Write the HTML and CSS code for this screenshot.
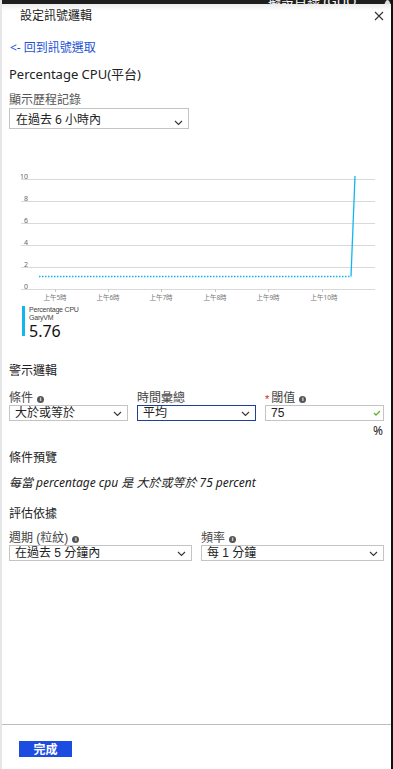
FILE: index.html
```html
<!DOCTYPE html>
<html lang="zh-Hant">
<head>
    <meta charset="UTF-8">
    <meta name="viewport" content="width=device-width, initial-scale=1.0">
    <title>設定訊號邏輯</title>
    <link rel="stylesheet" href="styles.css">
</head>
<body>
    <div class="panel">
        <div class="topbar"><span class="topbar-text">擬設首錄 (GUO...</span><span class="topbar-dot"></span></div>
        <div class="header">
            <span class="title">設定訊號邏輯</span>
            <svg class="close" width="10" height="10" viewBox="0 0 10 10"><path d="M1 1L9 9M9 1L1 9" stroke="#333" stroke-width="1.1" fill="none"/></svg>
        </div>

        <div class="content">
            <a class="back-link" href="#">&lt;- 回到訊號選取</a>
            <div class="metric-title">Percentage CPU(平台)</div>
            <div class="label">顯示歷程記錄</div>
            <div class="select select-history">
                <span>在過去 6 小時內</span>
                <svg class="chevron" width="9" height="6" viewBox="0 0 9 6"><path d="M1 1L4.5 4.5L8 1" stroke="#333" stroke-width="1.1" fill="none"/></svg>
            </div>
        </div>

        <svg class="chart" width="389" height="173" viewBox="2 129 389 173">
            <g stroke="#d9d9d9" stroke-width="1">
                <line x1="21" y1="179.5" x2="375" y2="179.5"/>
                <line x1="21" y1="201.5" x2="375" y2="201.5"/>
                <line x1="21" y1="223.5" x2="375" y2="223.5"/>
                <line x1="21" y1="245.5" x2="375" y2="245.5"/>
                <line x1="21" y1="267.5" x2="375" y2="267.5"/>
                <line x1="21" y1="289.5" x2="375" y2="289.5"/>
            </g>
            <g stroke="#c8c8c8" stroke-width="1">
                <line x1="55.5" y1="289" x2="55.5" y2="292"/>
                <line x1="108.5" y1="289" x2="108.5" y2="292"/>
                <line x1="161.5" y1="289" x2="161.5" y2="292"/>
                <line x1="215.5" y1="289" x2="215.5" y2="292"/>
                <line x1="268.5" y1="289" x2="268.5" y2="292"/>
                <line x1="322.5" y1="289" x2="322.5" y2="292"/>
            </g>
            <g class="axis-y" font-size="7" fill="#666">
                <text x="20" y="179">10</text>
                <text x="24" y="201">8</text>
                <text x="24" y="223">6</text>
                <text x="24" y="245">4</text>
                <text x="24" y="267">2</text>
                <text x="24" y="289">0</text>
            </g>
            <g class="axis-x" font-size="6.5" fill="#777" text-anchor="middle">
                <text x="55" y="300">上午5時</text>
                <text x="108" y="300">上午6時</text>
                <text x="161" y="300">上午7時</text>
                <text x="215" y="300">上午8時</text>
                <text x="268" y="300">上午9時</text>
                <text x="324" y="300">上午10時</text>
            </g>
            <line x1="39" y1="276.5" x2="351" y2="276.5" stroke="#11b6f0" stroke-width="1.3" stroke-dasharray="1.5 1.5"/>
            <polyline points="351,276.5 355,176" stroke="#11b6f0" stroke-width="1.3" fill="none"/>
        </svg>

        <div class="content">
            <div class="legend">
                <div class="legend-bar"></div>
                <div class="legend-text">
                    <div class="legend-name">Percentage CPU</div>
                    <div class="legend-name">GaryVM</div>
                    <div class="legend-value">5.76</div>
                </div>
            </div>

            <div class="section-title alert-title">警示邏輯</div>
            <div class="field-row">
                <div class="field field-third">
                    <div class="field-label">條件 <span class="info">i</span></div>
                    <div class="select small">
                        <span>大於或等於</span>
                        <svg class="chevron" width="9" height="6" viewBox="0 0 9 6"><path d="M1 1L4.5 4.5L8 1" stroke="#333" stroke-width="1.1" fill="none"/></svg>
                    </div>
                </div>
                <div class="field field-third">
                    <div class="field-label">時間彙總</div>
                    <div class="select small focused">
                        <span>平均</span>
                        <svg class="chevron" width="9" height="6" viewBox="0 0 9 6"><path d="M1 1L4.5 4.5L8 1" stroke="#333" stroke-width="1.1" fill="none"/></svg>
                    </div>
                </div>
                <div class="field field-third">
                    <div class="field-label"><span class="required">*</span> 閾值 <span class="info">i</span></div>
                    <div class="select small input">
                        <span>75</span>
                        <svg class="check" width="8" height="6" viewBox="0 0 8 6"><path d="M1 3L3 5L7 1" stroke="#5fb32e" stroke-width="1.3" fill="none"/></svg>
                    </div>
                </div>
            </div>
            <div class="unit">%</div>

            <div class="section-title preview-title">條件預覽</div>
            <div class="preview">每當 percentage cpu 是 大於或等於 75 percent</div>

            <div class="section-title eval-title">評估依據</div>
            <div class="field-row eval-row">
                <div class="field field-half">
                    <div class="field-label">週期 (粒紋) <span class="info">i</span></div>
                    <div class="select small">
                        <span>在過去 5 分鐘內</span>
                        <svg class="chevron" width="9" height="6" viewBox="0 0 9 6"><path d="M1 1L4.5 4.5L8 1" stroke="#333" stroke-width="1.1" fill="none"/></svg>
                    </div>
                </div>
                <div class="field field-half">
                    <div class="field-label">頻率 <span class="info">i</span></div>
                    <div class="select small">
                        <span>每 1 分鐘</span>
                        <svg class="chevron" width="9" height="6" viewBox="0 0 9 6"><path d="M1 1L4.5 4.5L8 1" stroke="#333" stroke-width="1.1" fill="none"/></svg>
                    </div>
                </div>
            </div>
        </div>

        <div class="footer">
            <button class="done-button">完成</button>
        </div>
    </div>
</body>
</html>
```

FILE: styles.css
```css
body {
    margin: 0;
    padding: 0;
    font-family: "Noto Sans", "Noto Sans CJK TC", sans-serif;
    color: #222;
    background: #fff;
}

.panel {
    height: 769px;
    display: flex;
    flex-direction: column;
    border-left: 2px solid #e6e6e6;
    border-right: 2px solid #111;
    box-sizing: border-box;
    overflow: hidden;
}

.topbar {
    height: 4px;
    background: #1e1e1e;
    overflow: hidden;
    display: flex;
    align-items: flex-end;
    white-space: nowrap;
}

.topbar-text {
    margin-left: 266px;
    margin-bottom: -4px;
    color: #fff;
    font-size: 13px;
    line-height: 13px;
}

.topbar-dot {
    width: 18px;
    height: 18px;
    border-radius: 50%;
    background: #ddd;
    margin-left: 18px;
    margin-bottom: -14px;
}

.header {
    height: 22px;
    display: flex;
    align-items: center;
    justify-content: space-between;
    padding: 0 7px 0 18px;
    background: linear-gradient(#ececec, #fff 7px);
}

.title {
    font-size: 12px;
    line-height: 22px;
    padding-top: 1px;
}

.close {
    margin-top: 1px;
}

.content {
    padding: 0 7px;
}

.back-link {
    display: block;
    margin-top: 14px;
    font-size: 12px;
    line-height: 16px;
    color: #2452d6;
    text-decoration: none;
    padding-left: 1px;
}

.metric-title {
    margin-top: 9px;
    font-size: 13px;
    line-height: 18px;
}

.label {
    margin-top: 9px;
    font-size: 12px;
    line-height: 16px;
    color: #555;
}

.select {
    box-sizing: border-box;
    border: 1px solid #c4c4c4;
    display: flex;
    align-items: center;
    justify-content: space-between;
    font-size: 12px;
    color: #222;
    background: #fff;
}

.select-history {
    width: 180px;
    height: 21px;
    padding: 0 5px 0 6px;
}

.select-history .chevron {
    margin-top: 8px;
}

.chart {
    display: block;
}

.axis-y text,
.axis-x text {
    font-family: "Noto Sans", "Noto Sans CJK TC", sans-serif;
}

.legend {
    margin-top: 4px;
    display: flex;
    align-items: flex-start;
    padding-left: 13px;
    height: 30px;
}

.legend-bar {
    width: 3px;
    height: 30px;
    background: #11b6f0;
}

.legend-text {
    padding-left: 4px;
}

.legend-name {
    font-family: "Liberation Sans", sans-serif;
    font-size: 7px;
    line-height: 8px;
    height: 8px;
    color: #444;
    letter-spacing: -0.2px;
}

.legend-value {
    font-size: 16px;
    line-height: 16px;
    margin-top: 1px;
    color: #111;
}

.section-title {
    font-size: 12px;
    line-height: 16px;
    color: #222;
}

.alert-title {
    margin-top: 27px;
}

.field-row {
    display: flex;
    gap: 9px;
    margin-top: 12px;
}

.field-third {
    width: 119px;
}

.field-half {
    width: 183px;
}

.field-label {
    font-family: "Liberation Sans", "Noto Sans CJK TC", sans-serif;
    font-size: 12px;
    line-height: 14px;
    height: 14px;
    color: #444;
    display: flex;
    align-items: center;
    white-space: nowrap;
}

.info {
    display: inline-flex;
    align-items: center;
    justify-content: center;
    width: 7px;
    height: 7px;
    border-radius: 50%;
    background: #555;
    color: #fff;
    font-size: 6px;
    font-weight: bold;
    line-height: 7px;
    margin-left: 4px;
    margin-top: 2px;
}

.required {
    color: #e02020;
    font-size: 11px;
    line-height: 11px;
    margin-right: 2px;
    margin-top: 3px;
}

.select.small {
    font-family: "Liberation Sans", "Noto Sans CJK TC", sans-serif;
    height: 16px;
    padding: 0 5px 0 5px;
    line-height: 14px;
}

.select.small .chevron {
    margin-top: 1px;
}

.select.focused {
    border-color: #1f4099;
}

.select.input .check {
    margin-right: -3px;
}

.unit {
    margin-top: 3px;
    font-size: 12px;
    line-height: 14px;
    text-align: right;
    padding-right: 1px;
}

.preview-title {
    margin-top: 12px;
}

.preview {
    margin-top: 9px;
    font-size: 12px;
    line-height: 16px;
    font-style: italic;
    color: #222;
}

.eval-title {
    margin-top: 15px;
}

.eval-row {
    margin-top: 9px;
}

.footer {
    margin-top: auto;
    height: 45px;
    border-top: 1px solid #bdbdbd;
    padding: 16px 0 0 17px;
    box-sizing: border-box;
}

.done-button {
    display: block;
    width: 53px;
    height: 16px;
    padding: 0;
    border: none;
    background: #1c4ce0;
    color: #fff;
    font-family: "Noto Sans CJK TC", sans-serif;
    font-size: 12px;
    font-weight: bold;
    line-height: 16px;
}
```
